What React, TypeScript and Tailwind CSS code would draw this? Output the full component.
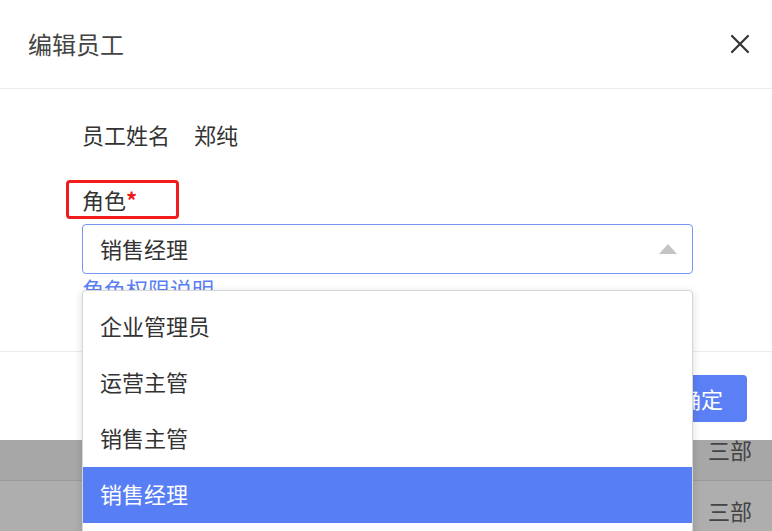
import React from "react";

const FONT = { fontFamily: '"Microsoft YaHei", "Noto Sans CJK SC", "Noto Sans", sans-serif' };

const ROLES = ["企业管理员", "运营主管", "销售主管", "销售经理"];

function CloseIcon() {
  return (
    <svg width="20" height="20" viewBox="0 0 20 20" className="text-[#333]">
      <path d="M2 2 L18 18 M18 2 L2 18" stroke="currentColor" strokeWidth="2.2" strokeLinecap="round" />
    </svg>
  );
}

export default function App() {
  return (
    <div className="relative h-[531px] w-[772px] overflow-hidden bg-[#a7a7a7]" style={FONT}>
      {/* modal */}
      <div className="flex flex-col bg-white">
        <div className="flex h-[89px] items-center justify-between border-b border-[#ececec] pl-[28px] pr-[22px]">
          <span className="text-[24px] leading-[30px] text-[#444]">编辑员工</span>
          <CloseIcon />
        </div>

        <div className="flex h-[262px] flex-col pl-[82px] pr-[79px] pt-[30px]">
          <div className="flex gap-[24px] text-[22px] leading-[30px] text-[#333]">
            <span>员工姓名</span>
            <span>郑纯</span>
          </div>
          <div className="mt-[35px] flex text-[22px] leading-[30px] text-[#333]">
            角色<span className="font-bold text-[#f01818]">*</span>
          </div>
          <div className="mt-[10px] flex h-[50px] items-center justify-between rounded-[4px] border border-[#7596f5] pl-[17px] pr-[15px]">
            <span className="-mt-[2px] text-[22px] text-[#333]">销售经理</span>
            <svg width="18" height="10" viewBox="0 0 18 10">
              <path d="M9 0 L18 10 L0 10 Z" fill="#c4c4c4" />
            </svg>
          </div>
          <span className="text-[22px] leading-[28px] text-[#5b80f5]">角色权限说明</span>
        </div>

        <div className="flex h-[89px] items-center justify-end border-t border-[#ececec] pr-[25px] pt-[4px]">
          <button className="h-[47px] rounded-[4px] bg-[#5b80f5] px-[24px] text-[22px] text-white">确定</button>
        </div>
      </div>

      {/* table rows behind the overlay */}
      <div className="flex h-[41px] items-start justify-end border-b border-[#9a9a9a] bg-[#a7a7a7] pr-[20px]">
        <span className="-mt-[6px] text-[22px] leading-[30px] text-[#444]">三部</span>
      </div>
      <div className="flex h-[50px] items-center justify-end bg-[#aeaeae] pr-[20px]">
        <span className="mt-[8px] text-[22px] leading-[30px] text-[#444]">三部</span>
      </div>

      {/* red annotation box */}
      <div className="pointer-events-none absolute left-[66px] top-[180px] h-[39px] w-[113px] rounded-[4px] border-[3px] border-[#f21c1c]" />

      {/* dropdown menu */}
      <div className="absolute left-[82px] top-[290px] w-[611px] rounded-[4px] border border-[#d6d6d6] bg-white pb-[56px] pt-[8px] shadow-[0_2px_8px_rgba(0,0,0,0.15)]">
        {ROLES.map((r) => (
          <div
            key={r}
            className={
              r === "销售经理"
                ? "flex h-[56px] items-center bg-[#587ef5] pb-[3px] pl-[17px] text-[22px] text-white"
                : "flex h-[56px] items-center pb-[3px] pl-[17px] text-[22px] text-[#333]"
            }
          >
            {r}
          </div>
        ))}
      </div>
    </div>
  );
}
